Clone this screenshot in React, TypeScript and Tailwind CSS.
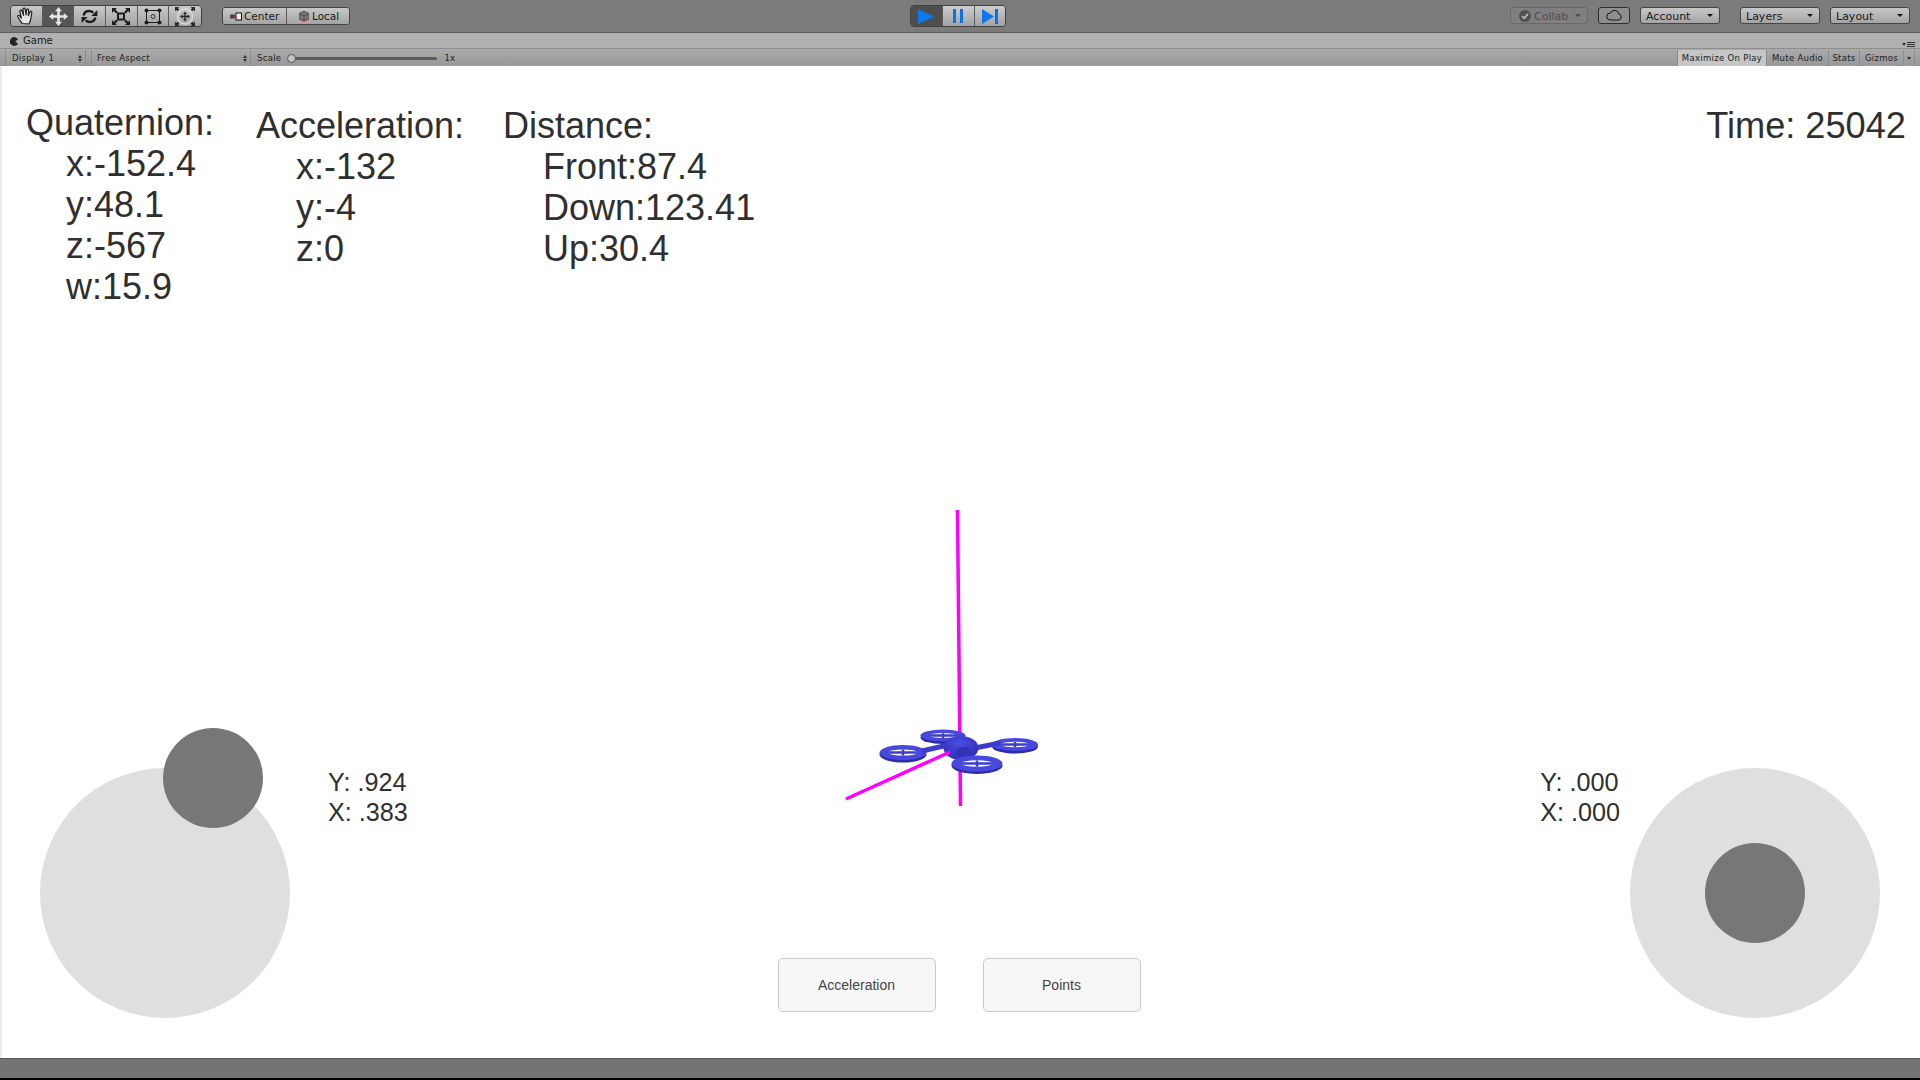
import React from "react";

const ui = "font-['DejaVu_Sans',sans-serif]";
const arial = "font-['Liberation_Sans',Arial,sans-serif]";

function Hand() {
  return (
    <svg width="20" height="20" viewBox="0 0 20 20" fill="#e4e4e4" stroke="#222" strokeWidth="1.2" strokeLinejoin="round" strokeLinecap="round">
      <path d="M6.2 17.5C4.6 15.6 2.8 12.8 1.8 10.8c-.5-1.1 1-1.9 1.9-.9L5.4 12 3.9 5.4c-.3-1.3 1.5-1.8 2-.5L7.6 9.4 7 3.3c-.1-1.4 1.8-1.6 2.1-.2l1 5.9.5-5c.1-1.3 2-1.2 2 .2l-.2 5.4 1.5-3.6c.5-1.2 2.2-.6 1.9.7l-1.1 6.6c-.3 1.6-.9 3-1.8 4.7z" />
    </svg>
  );
}

function MoveIcon() {
  return (
    <svg width="19" height="19" viewBox="0 0 19 19" fill="#e6e6e6">
      <path d="M9.5 0 13 4.2h-2.200v4h4V6L19 9.500 14.800 13v-2.200h-4v4H13L9.500 19 6 14.800h2.200v-4h-4V13L0 9.500 4.200 6v2.200h4v-4H6z" />
    </svg>
  );
}

function RotateIcon() {
  return (
    <svg width="17" height="15" viewBox="0 0 17 15" fill="#1c1c1c">
      <path d="M2.600 6.400C3.200 3.600 5.500 2 8.200 2c1.700 0 3.100.7 4.100 1.800" fill="none" stroke="#1c1c1c" strokeWidth="2.400" />
      <path d="M16.400 1v6h-6z" />
      <path d="M14.400 8.600C13.800 11.400 11.500 13 8.800 13c-1.700 0-3.100-.7-4.100-1.800" fill="none" stroke="#1c1c1c" strokeWidth="2.400" />
      <path d="M.6 14V8h6z" />
    </svg>
  );
}

function ScaleIcon() {
  return (
    <svg width="18" height="17" viewBox="0 0 18 17" fill="#1c1c1c">
      <rect x="6" y="5.500" width="6" height="6" fill="none" stroke="#1c1c1c" strokeWidth="2" />
      <path d="M0 0h5L3.400 1.600l2.400 2.400-1.600 1.500L1.800 3.100 0 5z" />
      <path d="M18 0h-5l1.600 1.600-2.400 2.400 1.600 1.500 2.400-2.400L18 5z" />
      <path d="M0 17h5l-1.600-1.600 2.400-2.400-1.600-1.500-2.400 2.400L0 12z" />
      <path d="M18 17h-5l1.600-1.600-2.400-2.400 1.600-1.500 2.400 2.400L18 12z" />
    </svg>
  );
}

function RectIcon() {
  return (
    <svg width="18" height="17" viewBox="0 0 18 17">
      <rect x="2.500" y="2.500" width="13" height="12" fill="none" stroke="#1c1c1c" strokeWidth="1" />
      <circle cx="2.500" cy="2.500" r="2" fill="#1c1c1c" />
      <circle cx="15.500" cy="2.500" r="2" fill="#1c1c1c" />
      <circle cx="2.500" cy="14.500" r="2" fill="#1c1c1c" />
      <circle cx="15.500" cy="14.500" r="2" fill="#1c1c1c" />
      <circle cx="9" cy="8.500" r="2" fill="none" stroke="#333" strokeWidth="1" />
    </svg>
  );
}

function TransformIcon() {
  return (
    <svg width="20" height="19" viewBox="0 0 20 19" fill="#2a2a2a">
      <circle cx="10" cy="9.500" r="7.500" fill="none" stroke="#dcdcdc" strokeWidth="1.400" />
      <path d="M10 4.500 12 7h-1.300v1.800h1.800V7.500L15 9.500l-2.500 2v-1.300h-1.800V12H12l-2 2.500L8 12h1.300v-1.800H7.500v1.300L5 9.500l2.500-2v1.300h1.800V7H8z" />
      <path d="M0 0h4.500L3 1.300 4.300 2.600 2.600 4.300 1.300 3 0 4.500z" />
      <path d="M20 0h-4.500L17 1.300 15.700 2.600l1.700 1.700L18.700 3 20 4.500z" />
      <path d="M0 19h4.500L3 17.700l1.300-1.300-1.700-1.700L1.300 16 0 14.500z" />
      <path d="M20 19h-4.500l1.500-1.300-1.300-1.300 1.700-1.700 1.300 1.300 1.300-1.500z" />
    </svg>
  );
}

function ToolButton({ active, children, last }: { active?: boolean; children: React.ReactNode; last?: boolean }) {
  return (
    <div
      className={
        "flex w-[32px] items-center justify-center border-[#5b5b5b] " +
        (last ? "" : "border-r ") +
        (active ? "bg-[#565656]" : "bg-linear-to-b from-[#c9c9c9] to-[#a3a3a3]")
      }
    >
      {children}
    </div>
  );
}

function Dropdown({ label, width, disabled }: { label: string; width: string; disabled?: boolean }) {
  return (
    <div
      className={
        "flex h-[17px] items-center justify-between rounded-[3px] border pl-[5px] pr-[6px] text-[11px] leading-none " +
        width +
        (disabled
          ? " border-[#696969] bg-[#7f7f7f] text-[#4d4d4d]"
          : " border-[#454545] bg-linear-to-b from-[#c8c8c8] to-[#a4a4a4] text-[#1a1a1a]")
      }
    >
      <span className="flex items-center gap-[3px] pt-[1px]">
        {disabled && (
          <svg className="ml-[3px]" width="12" height="12" viewBox="0 0 11 11">
            <circle cx="5.500" cy="5.500" r="5.500" fill="#505050" />
            <path d="M2.800 5.600 4.800 7.500 8.300 3.500" fill="none" stroke="#bbb" strokeWidth="1.600" />
          </svg>
        )}
        {label}
      </span>
      <span className={"h-0 w-0 border-x-[3px] border-t-[3px] border-x-transparent " + (disabled ? "border-t-[#4d4d4d]" : "border-t-[#111]")} />
    </div>
  );
}

function TopBar() {
  return (
    <div className={"grid h-[33px] grid-cols-[1fr_auto_1fr] border-b border-[#5f5f5f] bg-[#7b7b7b] " + ui}>
      <div className="flex items-start pl-[10px] pt-[5px]">
        <div className="flex h-[22px] w-[192px] overflow-hidden rounded-[4px] border border-[#404040]">
          <ToolButton><Hand /></ToolButton>
          <ToolButton active><MoveIcon /></ToolButton>
          <ToolButton><RotateIcon /></ToolButton>
          <ToolButton><ScaleIcon /></ToolButton>
          <ToolButton><RectIcon /></ToolButton>
          <ToolButton last><TransformIcon /></ToolButton>
        </div>
        <div className="ml-[20px] mt-[2px] flex h-[18px] overflow-hidden rounded-[3px] border border-[#454545] text-[10.500px] leading-none text-[#1a1a1a]">
          <div className="flex w-[64px] items-center gap-[2px] border-r border-[#5b5b5b] bg-linear-to-b from-[#c8c8c8] to-[#a4a4a4] pl-[7px]">
            <svg className="shrink-0" width="12" height="9" viewBox="0 0 12 9">
              <rect x="0" y="2.500" width="5" height="4" fill="#444" />
              <rect x="6" y="1" width="5.500" height="7" fill="#eee" stroke="#111" />
              <rect x="4" y="4" width="3" height="1" fill="#b33" />
            </svg>
            Center
          </div>
          <div className="flex w-[62px] items-center gap-[3px] bg-linear-to-b from-[#c8c8c8] to-[#a4a4a4] pl-[12px]">
            <svg className="shrink-0" width="10" height="11" viewBox="0 0 10 11">
              <path d="M5 0 10 2.500v5L5 10 0 7.500v-5z" fill="#777" stroke="#333" strokeWidth=".6" />
              <path d="M0 2.500 5 5l5-2.500M5 5v5" fill="none" stroke="#333" strokeWidth=".6" />
              <path d="M0 8 5 10.500 10 8" fill="none" stroke="#c33" strokeWidth="1" />
            </svg>
            Local
          </div>
        </div>
      </div>
      <div className="mr-[5px] pt-[5px]">
        <div className="flex h-[22px] w-[96px] overflow-hidden rounded-[4px] border border-[#404040]">
          <div className="flex w-[32px] items-center justify-center border-r border-[#5b5b5b] bg-[#4e4e4e]">
            <svg width="16" height="15" viewBox="0 0 16 15"><path d="M0 0 16 7.500 0 15z" fill="#0b78f2" /></svg>
          </div>
          <div className="flex w-[32px] items-center justify-center gap-[4px] border-r border-[#5b5b5b] bg-linear-to-b from-[#cdcdcd] to-[#a3a3a3]">
            <span className="h-[14px] w-[3px] bg-[#0b6fe8]" />
            <span className="h-[14px] w-[3px] bg-[#0b6fe8]" />
          </div>
          <div className="flex flex-1 items-center justify-center bg-linear-to-b from-[#cdcdcd] to-[#a3a3a3]">
            <svg width="16" height="15" viewBox="0 0 16 15"><path d="M0 0 12 7.500 0 15z" fill="#0b78f2" /><rect x="13" y="0" width="3" height="15" fill="#0b6fe8" /></svg>
          </div>
        </div>
      </div>
      <div className="flex items-start justify-end pr-[10px] pt-[7px]">
        <Dropdown label="Collab" width="w-[78px]" disabled />
        <div className="ml-[10px] flex h-[17px] w-[32px] items-center justify-center rounded-[3px] border border-[#2e2e2e] bg-[#8f8f8f]">
          <svg width="16" height="11" viewBox="0 0 16 11"><path d="M4 10h8.500a3 3 0 0 0 .5-5.900A4.500 4.500 0 0 0 4.500 3 3.500 3.500 0 0 0 4 10z" fill="none" stroke="#111" strokeWidth="1" /></svg>
        </div>
        <Dropdown label="Account" width="ml-[10px] w-[80px]" />
        <Dropdown label="Layers" width="ml-[20px] w-[80px]" />
        <Dropdown label="Layout" width="ml-[10px] w-[80px]" />
      </div>
    </div>
  );
}

function GameTab() {
  return (
    <div className={"flex h-[16px] items-center justify-between border-b border-[#8f8f8f] bg-[#b0b0b0] pl-[10px] pr-[5px] pt-[1px] text-[10px] leading-none text-[#1a1a1a] " + ui}>
      <div className="flex items-center gap-[4px]">
        <svg width="9" height="9" viewBox="0 0 9 9"><path d="M8 2.200A4.400 4.400 0 1 0 8 6.800L5.200 4.500z" fill="#222" /></svg>
        Game
      </div>
      <div className="mt-[6px] flex items-center gap-[1px]">
        <span className="h-0 w-0 border-x-[2px] border-t-[3px] border-x-transparent border-t-[#333]" />
        <span className="flex flex-col gap-[1px]">
          <span className="h-px w-[8px] bg-[#333]" />
          <span className="h-px w-[8px] bg-[#333]" />
          <span className="h-px w-[8px] bg-[#333]" />
        </span>
      </div>
    </div>
  );
}

function UpDown() {
  return (
    <span className="flex flex-col gap-[1px]">
      <span className="h-0 w-0 border-x-[2px] border-b-[3px] border-x-transparent border-b-[#333]" />
      <span className="h-0 w-0 border-x-[2px] border-t-[3px] border-x-transparent border-t-[#333]" />
    </span>
  );
}

function GameOptions() {
  return (
    <div className={"flex h-[17px] items-stretch bg-linear-to-b from-[#aaaaaa] to-[#989898] pt-[1px] text-[8.500px] leading-none tracking-[0.3px] text-[#222] " + ui}>
      <div className="ml-[5px] flex w-[81px] items-center justify-between border-x border-[#8a8a8a] pl-[6px] pr-[3px]">
        Display 1 <UpDown />
      </div>
      <div className="ml-[5px] flex w-[160px] items-center justify-between border-x border-[#8a8a8a] pl-[5px] pr-[3px]">
        Free Aspect <UpDown />
      </div>
      <div className="ml-[6px] flex items-center">
        Scale
        <div className="relative ml-[8px] h-[3px] w-[148px] rounded-full bg-[#5c5c5c]">
          <span className="absolute left-[-2px] top-[-3px] h-[9px] w-[9px] rounded-full border border-[#555] bg-[#c2c2c2]" />
        </div>
        <span className="ml-[7px]">1x</span>
      </div>
      <div className="ml-auto flex items-stretch pr-[5px]">
        <div className="flex w-[90px] items-center justify-center border-x border-[#8a8a8a] bg-[#c6c6c6]">Maximize On Play</div>
        <div className="flex w-[62px] items-center justify-center border-r border-[#8a8a8a]">Mute Audio</div>
        <div className="flex w-[31px] items-center justify-center border-r border-[#8a8a8a]">Stats</div>
        <div className="flex w-[44px] items-center justify-center border-r border-[#8a8a8a]">Gizmos</div>
        <div className="flex w-[11px] items-center justify-center border-r border-[#8a8a8a]">
          <span className="h-0 w-0 border-x-[2px] border-t-[3px] border-x-transparent border-t-[#333]" />
        </div>
      </div>
    </div>
  );
}

function Readout({ title, rows, width, top }: { title: string; rows: string[]; width: string; top: string }) {
  return (
    <div className={width + " " + top}>
      <div>{title}</div>
      {rows.map((r) => (
        <div key={r} className="pl-[40px]">{r}</div>
      ))}
    </div>
  );
}

function Joystick({ knob }: { knob: string }) {
  return (
    <div className="relative h-[250px] w-[250px] shrink-0 rounded-full bg-[#dfdfdf]">
      <div className={"absolute h-[100px] w-[100px] rounded-full bg-[#777777] " + knob} />
    </div>
  );
}

function Rotor({ cx, cy, rx, ry }: { cx: number; cy: number; rx: number; ry: number }) {
  return (
    <g>
      <ellipse cx={cx} cy={cy + 1.5} rx={rx} ry={ry - 0.5} fill="#2b2bab" />
      <ellipse cx={cx} cy={cy - 0.5} rx={rx} ry={ry - 1} fill="#4848dc" />
      <ellipse cx={cx} cy={cy - 0.5} rx={rx * 0.62} ry={ry * 0.36} fill="#ffffff" />
      <path
        d={`M${cx - rx * 0.62} ${cy - 0.5}H${cx + rx * 0.62}M${cx} ${cy - ry * 0.4}V${cy + ry * 0.3}`}
        stroke="#3d3dc8"
        strokeWidth="2.500"
      />
    </g>
  );
}

function Drone() {
  return (
    <svg className="absolute left-[838px] top-[439px]" width="200" height="305" viewBox="840 505 200 305">
      <defs>
        <radialGradient id="body" cx="0.45" cy="0.3" r="0.8">
          <stop offset="0" stopColor="#4c4ce6" />
          <stop offset="1" stopColor="#2a2aa8" />
        </radialGradient>
      </defs>
      <line x1="957.500" y1="510" x2="960.500" y2="806" stroke="#ff00ff" strokeWidth="3.500" />
      <Rotor cx={943} cy={736} rx={22.500} ry={7} />
      <Rotor cx={903} cy={753} rx={23.500} ry={8.500} />
      <Rotor cx={1015} cy={745} rx={23} ry={7.500} />
      <path d="M922 751 948 745M975 748 1000 743" stroke="#3c3cc8" strokeWidth="5" />
      <ellipse cx="961" cy="748" rx="17.500" ry="12" fill="url(#body)" />
      <ellipse cx="964" cy="753" rx="8" ry="6" fill="#3232b4" />
      <Rotor cx={977} cy={764} rx={25.500} ry={9} />
      <line x1="846" y1="799" x2="950" y2="752" stroke="#ff00ff" strokeWidth="3.500" />
    </svg>
  );
}

function GameView() {
  return (
    <div className={"relative flex flex-1 flex-col justify-between border-l-2 border-[#eeeeee] bg-white text-[#2f2f2f] " + arial}>
      <Drone />
      <div className="flex items-start pl-[24px] text-[36px] leading-[41px]">
        <Readout title="Quaternion:" rows={["x:-152.4", "y:48.1", "z:-567", "w:15.9"]} width="w-[230px]" top="mt-[36px]" />
        <Readout title="Acceleration:" rows={["x:-132", "y:-4", "z:0"]} width="w-[247px]" top="mt-[39px]" />
        <Readout title="Distance:" rows={["Front:87.4", "Down:123.41", "Up:30.4"]} width="w-[300px]" top="mt-[39px]" />
        <div className="ml-auto mr-[14px] mt-[39px] text-[36.200px]">Time: 25042</div>
      </div>
      <div className="mb-[40px] grid grid-cols-[1fr_auto_1fr] items-start pl-[38px] pr-[40px]">
        <div className="flex items-start">
          <Joystick knob="left-[123px] top-[-40px]" />
          <div className="ml-[38px] mt-[-1px] text-[25.200px] leading-[30px]">
            <div>Y: .924</div>
            <div>X: .383</div>
          </div>
        </div>
        <div className="mr-[2px] mt-[190px] flex gap-[47px] text-[14px] text-[#444444]">
          <div className="flex h-[54px] w-[158px] items-center justify-center rounded-[5px] border border-[#c8c8c8] bg-[#f7f7f7]">Acceleration</div>
          <div className="flex h-[54px] w-[158px] items-center justify-center rounded-[5px] border border-[#c8c8c8] bg-[#f7f7f7]">Points</div>
        </div>
        <div className="flex items-start justify-end">
          <div className="mr-[10px] mt-[-1px] text-[25.200px] leading-[30px]">
            <div>Y: .000</div>
            <div>X: .000</div>
          </div>
          <Joystick knob="left-[75px] top-[75px]" />
        </div>
      </div>
    </div>
  );
}

export default function App() {
  return (
    <div className="flex h-[1080px] w-[1920px] flex-col overflow-hidden bg-black">
      <TopBar />
      <GameTab />
      <GameOptions />
      <GameView />
      <div className="h-[20px] border-t border-[#555555] bg-[#747474]" />
      <div className="h-[2px] bg-black" />
    </div>
  );
}
